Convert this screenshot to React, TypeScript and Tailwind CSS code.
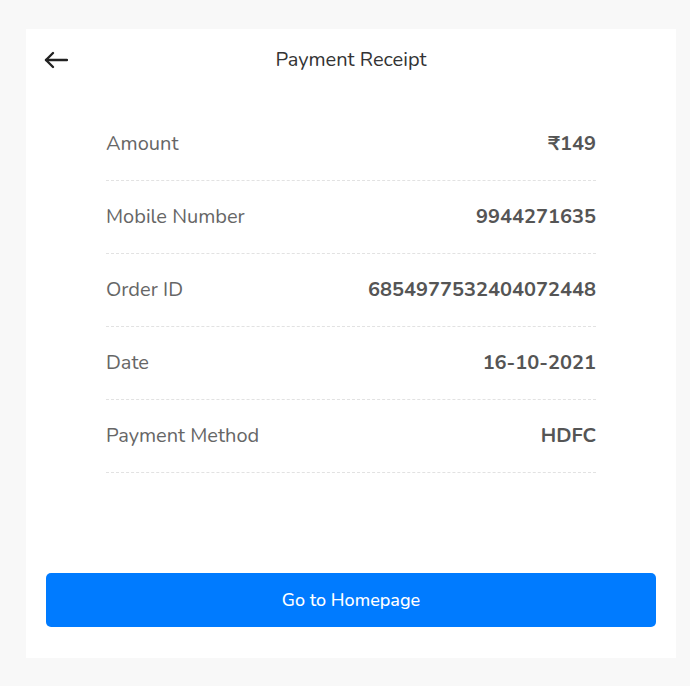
const rows = [
  { label: 'Amount', value: '₹149' },
  { label: 'Mobile Number', value: '9944271635' },
  { label: 'Order ID', value: '6854977532404072448' },
  { label: 'Date', value: '16-10-2021' },
  { label: 'Payment Method', value: 'HDFC' },
];

export default function App() {
  return (
    <div
      className="min-h-[686px] bg-[#f8f8f8] pl-[26px] pr-[14px] pt-[29px] pb-[27px]"
      style={{ fontFamily: 'Nunito, Lato, "Noto Sans", sans-serif' }}
    >
      <div className="bg-white px-5 pt-[11px] pb-[31px]">
        {/* Header */}
        <div className="relative flex h-10 items-center justify-center">
          <button className="absolute -left-[2px] top-1/2 -translate-y-1/2 text-[#222]">
            <svg width="24" height="18" viewBox="0 0 24 18" fill="none" stroke="currentColor" strokeWidth="2.4" strokeLinecap="round" strokeLinejoin="round">
              <path d="M23 9H2" />
              <path d="M9 2L2 9l7 7" />
            </svg>
          </button>
          <h1 className="text-[20px] text-[#333]">Payment Receipt</h1>
        </div>

        {/* Details */}
        <div className="mt-[28px] px-[60px]">
          {rows.map((row) => (
            <div
              key={row.label}
              className="flex items-center justify-between border-b border-dashed border-[#e2e2e2] py-6 text-[20px] leading-6"
            >
              <span className="text-[#666]">{row.label}</span>
              <span className="font-bold text-[#555]">{row.value}</span>
            </div>
          ))}
        </div>

        <button className="mt-[100px] flex h-[54px] w-full items-center justify-center rounded-[5px] bg-[#007bff] text-[18px] font-medium text-white">
          Go to Homepage
        </button>
      </div>
    </div>
  );
}
